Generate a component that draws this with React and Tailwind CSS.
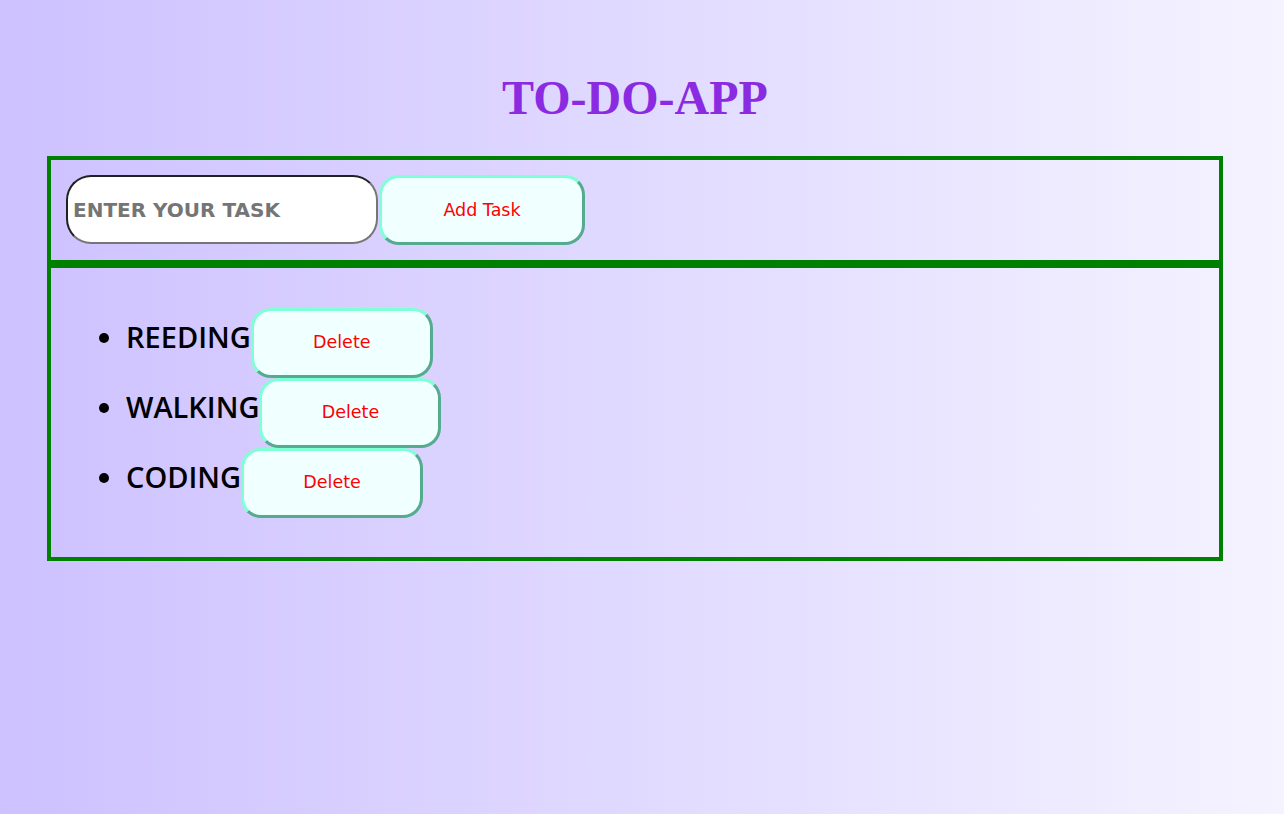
import { useState } from 'react';

export default function App() {
  const [task, setTask] = useState('');
  const [todos, setTodos] = useState(['REEDING', 'WALKING', 'CODING']);

  const addTask = () => {
    if (!task.trim()) return;
    setTodos([...todos, task.toUpperCase()]);
    setTask('');
  };

  const deleteTask = (index) => {
    setTodos(todos.filter((_, i) => i !== index));
  };

  return (
    <div className="min-h-[814px] bg-gradient-to-r from-[#cdc1ff] to-[#f5f3ff] font-['DejaVu_Sans',sans-serif]">
      <div className="ml-[47px] w-[1176px] pt-[71px]">
        <h1 className="text-center text-[48px] leading-[53px] font-bold text-[#8a2be2] font-['Liberation_Serif',serif]">
          TO-DO-APP
        </h1>

        {/* Input row */}
        <div className="mt-[32px] border-4 border-[#008000] p-[15px] flex">
          <input
            type="text"
            value={task}
            onChange={(e) => setTask(e.target.value)}
            placeholder="ENTER YOUR TASK"
            className="w-[312px] h-[69px] rounded-[25px] bg-white border-[2.5px] border-[#767676] [border-style:inset] px-[5px] text-[20px] font-bold text-black placeholder:text-[#757575] outline-none"
          />
          <button
            onClick={addTask}
            className="ml-px w-[206px] h-[70px] rounded-[20px] bg-[#f0ffff] border-[3px] border-[#7fffd4] [border-style:outset] text-[17.5px] text-[#ff0000]"
          >
            Add Task
          </button>
        </div>

        {/* Task list */}
        <div className="border-4 border-[#008000] px-[15px] pt-[40px] pb-[39px]">
          <ul className="list-disc pl-[60px] text-[29px] text-black font-['Open_Sans',sans-serif] font-semibold leading-none">
            {todos.map((todo, i) => (
              <li key={i} className="leading-none">
                {todo}
                <button
                  onClick={() => deleteTask(i)}
                  className="w-[182px] h-[70px] rounded-[20px] bg-[#f0ffff] border-[3px] border-[#7fffd4] [border-style:outset] text-[17.5px] text-[#ff0000] font-['DejaVu_Sans',sans-serif] font-normal align-baseline"
                >
                  Delete
                </button>
              </li>
            ))}
          </ul>
        </div>
      </div>
    </div>
  );
}
